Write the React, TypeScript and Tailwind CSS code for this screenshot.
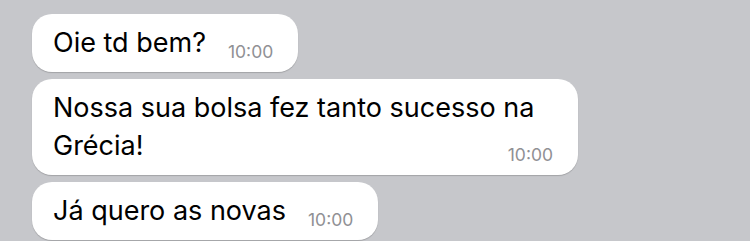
const messages = [
  { text: "Oie td bem?", time: "10:00" },
  { text: "Nossa sua bolsa fez tanto sucesso na Grécia!", time: "10:00" },
  { text: "Já quero as novas", time: "10:00" },
];

export default function App() {
  return (
    <div className="h-[241px] w-[750px] overflow-hidden bg-[#c6c7cb] pl-8 pt-[14px] font-['Inter',sans-serif]">
      <div className="flex flex-col items-start gap-[7px]">
        {messages.map((m, i) => (
          <div
            key={i}
            className="flow-root w-fit max-w-[546px] rounded-[20px] bg-white pb-[10px] pl-[21px] pr-[25px] pt-[10px] shadow-[0_1px_1px_rgba(0,0,0,0.18)]"
          >
            <span className="text-[27px] leading-[38px] text-black">{m.text}</span>
            <span className="float-right ml-[22px] mt-[19px] text-[17.5px] leading-[18px] text-[#909094]">
              {m.time}
            </span>
          </div>
        ))}
      </div>
    </div>
  );
}
